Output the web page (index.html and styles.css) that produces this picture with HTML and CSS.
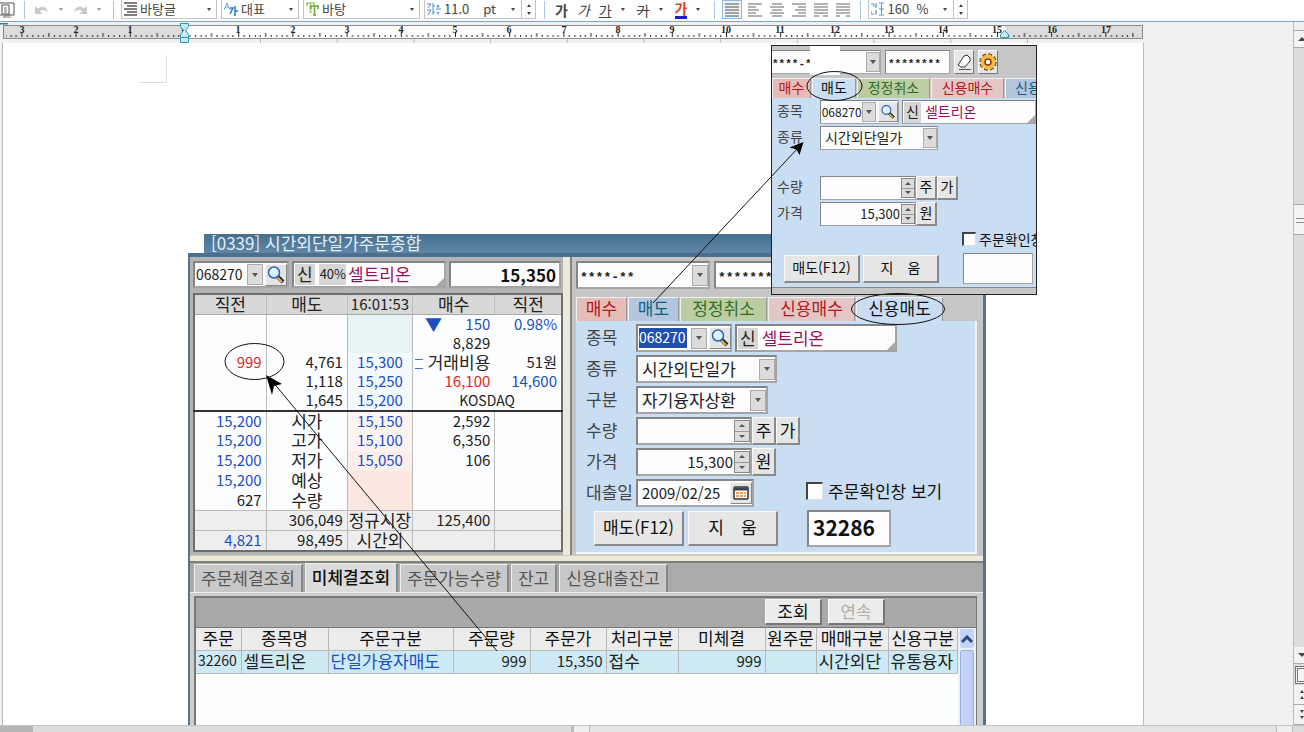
FILE: index.html
```html
<!DOCTYPE html>
<html lang="ko">
<head>
<meta charset="utf-8">
<title>시간외단일가주문종합</title>
<link rel="stylesheet" href="styles.css">
</head>
<body>
<svg class="defs" aria-hidden="true">
  <symbol id="search" viewBox="0 0 20 20"><path d="M11 11l6 6" stroke="#222" stroke-width="4"/><path d="M11.500 12.500l4.500 4.500" stroke="#e8b840" stroke-width="2"/><circle cx="8" cy="7.500" r="5.500" fill="#d8f2ff" stroke="#2f62b8" stroke-width="1.500"/><path d="M4.500 8a4 4 0 0 1 4-4" stroke="#fff" stroke-width="1.500" fill="none"/></symbol>
  <symbol id="undo" viewBox="0 0 16 12"><path d="M1 2v8h8L6 7.500c2-2 5-2 8 1C13 3 8 1 4 4.500z" fill="#c9c9c9"/></symbol>
  <symbol id="lines" viewBox="0 0 14 14"><path d="M0 1h14M0 4h14M0 7h14M0 10h14M0 13h14" stroke="#a0a0a0" stroke-width="2"/></symbol>
</svg>

<header class="toolbar">
  <button class="tool" aria-label="미리 보기"><svg width="15" height="16" viewBox="0 0 15 16"><path d="M0 1h14v12H0" fill="none" stroke="#555"/><path d="M2 3h7v9H2z" fill="#fff" stroke="#555"/><path d="M4 6h3M4 8h3M4 10h3M10 12v2H4v2h8" stroke="#777" fill="none"/></svg></button>
  <span class="sep sep-a"></span>
  <button class="tool undo" aria-label="되돌리기"><svg width="16" height="12"><use href="#undo"/></svg><i class="caret dim"></i></button>
  <button class="tool redo" aria-label="다시 실행"><svg width="16" height="12" class="flip"><use href="#undo"/></svg><i class="caret dim"></i></button>
  <span class="sep sep-b"></span>
  <label class="combo c-style"><svg width="13" height="14" viewBox="0 0 13 14"><path d="M0 1h13M3 4h10M0 7h13M3 10h10M0 13h13" stroke="#555" stroke-width="1.500"/></svg><select aria-label="스타일"><option>바탕글</option></select><i class="caret"></i></label>
  <label class="combo c-lang"><svg width="14" height="14" viewBox="0 0 14 14"><path d="M0 8l3-7 3 7M1 5h4" fill="none" stroke="#6aa4dc"/><path d="M6 6h3l-3 6M11 4v10M11 9h3" fill="none" stroke="#2f78c8" stroke-width="1.500"/></svg><select aria-label="언어"><option>대표</option></select><i class="caret"></i></label>
  <label class="combo c-font"><svg width="13" height="14" viewBox="0 0 13 14"><path d="M1 4V1h7v3M4.500 1v9M3 10h3" fill="none" stroke="#a4cf6a" stroke-width="1.500"/><path d="M5 7V4h7v3M8.500 4v9M7 13h3" fill="none" stroke="#6aa63a" stroke-width="1.500"/></svg><select aria-label="글꼴"><option>바탕</option></select><i class="caret"></i></label>
  <div class="combo c-size"><svg width="14" height="14" viewBox="0 0 14 14"><path d="M0 2h4l-3 4M6 1v6M6 4h2M0 8h4l-3 5M6 7v6M6 10h2M9 7h5M11 3v3M10 5l1-2 1 2M10 10l1 2 1-2" fill="none" stroke="#4a90d8"/></svg><input aria-label="글자 크기" value="11.0"><span>pt</span><i class="caret"></i><span class="spin"><i class="caret up"></i><i class="caret"></i></span></div>
  <span class="sep sep-c"></span>
  <button class="tool ga bold">가</button>
  <button class="tool ga ital">가</button>
  <button class="tool ga under"><u>가</u><i class="caret"></i></button>
  <button class="tool ga strike"><s>가</s><i class="caret"></i></button>
  <button class="tool ga color"><b>가</b><i class="caret"></i></button>
  <span class="sep sep-d"></span>
  <div class="aligns">
    <button class="tool on" aria-label="양쪽 정렬"><svg width="14" height="14"><use href="#lines"/></svg></button>
    <button class="tool" aria-label="왼쪽 정렬"><svg width="14" height="14" viewBox="0 0 14 14"><path d="M0 1h14M0 4h8M0 7h11M0 10h8M0 13h14" stroke="#999" stroke-width="1.500"/></svg></button>
    <button class="tool" aria-label="가운데 정렬"><svg width="14" height="14" viewBox="0 0 14 14"><path d="M2 1h10M0 4h14M2 7h10M0 10h14M2 13h10" stroke="#999" stroke-width="1.500"/></svg></button>
    <button class="tool" aria-label="오른쪽 정렬"><svg width="14" height="14" viewBox="0 0 14 14"><path d="M0 1h14M6 4h8M3 7h11M6 10h8M0 13h14" stroke="#999" stroke-width="1.500"/></svg></button>
    <button class="tool" aria-label="배분 정렬"><svg width="14" height="14" viewBox="0 0 14 14"><path d="M0 1h14M0 4h14M0 7h14M0 10h14M0 13h5M9 13h5" stroke="#999" stroke-width="1.500"/></svg></button>
    <button class="tool" aria-label="나눔 정렬"><svg width="14" height="14" viewBox="0 0 14 14"><path d="M0 1h14M0 4h14M0 7h14M0 10h14M0 13h4M10 13h4" stroke="#999" stroke-width="1.500"/></svg></button>
  </div>
  <span class="sep sep-e"></span>
  <div class="combo c-line"><svg width="13" height="14" viewBox="0 0 13 14"><path d="M0 2h3v3M5 1v5M5 3h1M0 9v3h3M5 8v5M5 10h1M8 1h5M8 7h5M8 13h5M10.500 2v10" fill="none" stroke="#4a90d8"/></svg><input aria-label="줄 간격" value="160"><span>%</span><i class="caret"></i><span class="spin"><i class="caret up"></i><i class="caret"></i></span></div>
</header>

<div class="work">
  <main class="doc">
    <svg class="ruler" height="20" aria-hidden="true">
      <defs><pattern id="ticks" x="184" y="0" width="54.200" height="18" patternUnits="userSpaceOnUse"><path d="M0.500 9v5M27.500 10v4M6 12v2M11.500 12v2M17 12v2M22 12v2M33 12v2M38.500 12v2M44 12v2M49 12v2" stroke="#222"/></pattern>
      <pattern id="marks" x="260" y="0" width="76.700" height="20" patternUnits="userSpaceOnUse"><path d="M0.500 16v4" stroke="#bbb"/></pattern></defs>
      <rect x="3.500" y="2.500" width="1139" height="13" fill="#fff" stroke="#8a8a8a"/>
      <path d="M4 3h180v12H4zM1005 3h137v12H1005z" fill="#dcdcdc"/>
      <rect x="6" y="0" width="1132" height="15" fill="url(#ticks)"/>
      <rect x="230" y="16" width="800" height="4" fill="url(#marks)"/>
      <g class="nums"><text x="22" y="10">3</text><text x="76" y="10">2</text><text x="130" y="10">1</text><text x="184" y="10">0</text><text x="238" y="10">1</text><text x="293" y="10">2</text><text x="347" y="10">3</text><text x="401" y="10">4</text><text x="455" y="10">5</text><text x="509" y="10">6</text><text x="564" y="10">7</text><text x="618" y="10">8</text><text x="672" y="10">9</text><text x="726" y="10">10</text><text x="780" y="10">11</text><text x="835" y="10">12</text><text x="889" y="10">13</text><text x="943" y="10">14</text><text x="997" y="10">15</text><text x="1052" y="10">16</text><text x="1106" y="10">17</text></g>
      <path d="M0 0h8" stroke="#2f7f9f" stroke-width="3"/>
      <path d="M180.500 0.500h8v3l-3 4 3 4v3h-8v-3l3-4-3-4zM180.500 14.500h8v5h-8z" fill="#bfeef8" stroke="#3a93a8"/>
      <path d="M1000.500 14.500v-3l4-4 4 4v3z" fill="#bfeef8" stroke="#3a93a8"/>
    </svg>
    <section class="sheet">
      <div class="corner"></div>

      <div class="hts">
        <h1 class="title"><span>[0339] 시간외단일가주문종합</span></h1>
        <div class="panes">
          <div class="quote">
            <div class="finder">
              <div class="box code"><input aria-label="종목코드" value="068270"><i class="drop"></i><button class="mini" aria-label="종목 검색"><svg width="20" height="20"><use href="#search"/></svg></button></div>
              <div class="box name fold"><span class="tag">신</span><span class="tag pct">40%</span><span class="stock">셀트리온</span></div>
              <div class="box last">15,350</div>
            </div>
            <table class="book">
              <colgroup><col class="k1"><col class="k2"><col class="k3"><col class="k4"><col class="k5"></colgroup>
              <thead><tr><th>직전</th><th>매도</th><th class="clock">16:01:53</th><th>매수</th><th>직전</th></tr></thead>
              <tbody class="asks">
                <tr><td></td><td></td><td rowspan="2"></td><td class="b"><span class="down">▼</span>150</td><td class="b">0.98%</td></tr>
                <tr><td></td><td></td><td>8,829</td><td></td></tr>
                <tr><td class="r">999</td><td>4,761</td><td class="b mid">15,300</td><td class="han"><span class="eq"></span>거래비용</td><td>51원</td></tr>
                <tr><td></td><td>1,118</td><td class="b mid">15,250</td><td class="r">16,100</td><td class="b">14,600</td></tr>
                <tr><td></td><td>1,645</td><td class="b mid">15,200</td><td colspan="2" class="mid market">KOSDAQ</td></tr>
              </tbody>
              <tbody class="bids">
                <tr><td class="b">15,200</td><td class="mid han">시가</td><td class="b mid">15,150</td><td>2,592</td><td></td></tr>
                <tr><td class="b">15,200</td><td class="mid han">고가</td><td class="b mid">15,100</td><td>6,350</td><td></td></tr>
                <tr><td class="b">15,200</td><td class="mid han">저가</td><td class="b mid">15,050</td><td>106</td><td></td></tr>
                <tr><td class="b">15,200</td><td class="mid han">예상</td><td></td><td></td><td></td></tr>
                <tr><td>627</td><td class="mid han">수량</td><td></td><td></td><td></td></tr>
              </tbody>
              <tfoot>
                <tr><td></td><td>306,049</td><td class="mid han">정규시장</td><td>125,400</td><td></td></tr>
                <tr><td class="b">4,821</td><td>98,495</td><td class="mid han">시간외</td><td></td><td></td></tr>
              </tfoot>
            </table>
          </div>
          <div class="order">
            <div class="account">
              <div class="box acct"><select aria-label="계좌"><option>****-**</option></select><i class="drop"></i></div>
              <div class="box pwd"><input aria-label="비밀번호" value="********"></div>
            </div>
            <nav class="tabs"><button class="t-buy">매수</button><button class="t-sell">매도</button><button class="t-mod">정정취소</button><button class="t-cbuy">신용매수</button><button class="t-on">신용매도</button></nav>
            <form class="form">
              <div class="row"><label for="m1">종목</label><div class="box code"><input id="m1" class="picked" value="068270"><i class="drop"></i><button type="button" class="mini" aria-label="종목 검색"><svg width="20" height="20"><use href="#search"/></svg></button></div><div class="box name fold"><span class="tag">신</span><span class="stock">셀트리온</span></div></div>
              <div class="row"><label for="m2">종류</label><div class="box kind"><select id="m2"><option>시간외단일가</option></select><i class="drop"></i></div></div>
              <div class="row"><label for="m3">구분</label><div class="box sort"><select id="m3"><option>자기융자상환</option></select><i class="drop"></i></div></div>
              <div class="row"><label for="m4">수량</label><div class="box amount"><input id="m4"><span class="updown"><i></i><i></i></span></div><button type="button" class="unit">주</button><button type="button" class="unit">가</button></div>
              <div class="row"><label for="m5">가격</label><div class="box amount"><input id="m5" value="15,300"><span class="updown"><i></i><i></i></span></div><button type="button" class="unit">원</button></div>
              <div class="row"><label for="m6">대출일</label><div class="box date"><input id="m6" value="2009/02/25"><button type="button" class="mini" aria-label="달력"><svg width="16" height="16" viewBox="0 0 16 16"><rect x="1" y="2" width="14" height="12" rx="1" fill="#fff" stroke="#333" stroke-width="1.500"/><path d="M1 4h14" stroke="#444" stroke-width="3"/><path d="M3 8h10M3 11h10" stroke="#f0a050" stroke-width="2" stroke-dasharray="3 1"/></svg></button></div><label class="check"><input type="checkbox">주문확인창 보기</label></div>
              <div class="acts"><button type="button">매도(F12)</button><button type="button">지&emsp;움</button><output class="box num">32286</output></div>
            </form>
          </div>
        </div>
        <div class="lower">
          <nav class="ltabs"><button>주문체결조회</button><button class="on">미체결조회</button><button>주문가능수량</button><button>잔고</button><button>신용대출잔고</button></nav>
          <div class="list">
            <div class="listbar"><button>조회</button><button disabled>연속</button></div>
            <div class="grid">
              <table class="orders">
                <colgroup><col class="o1"><col class="o2"><col class="o3"><col class="o4"><col class="o5"><col class="o6"><col class="o7"><col class="o8"><col class="o9"><col class="o10"></colgroup>
                <thead><tr><th>주문</th><th>종목명</th><th>주문구분</th><th>주문량</th><th>주문가</th><th>처리구분</th><th>미체결</th><th>원주문</th><th>매매구분</th><th>신용구분</th></tr></thead>
                <tbody><tr><td class="id">32260</td><td>셀트리온</td><td class="b">단일가융자매도</td><td class="num">999</td><td class="num">15,350</td><td>접수</td><td class="num">999</td><td></td><td>시간외단</td><td>유통융자</td></tr></tbody>
              </table>
              <div class="xpbar"><button aria-label="위로"><svg width="12" height="8" viewBox="0 0 12 8"><path d="M1 7l5-5 5 5" fill="none" stroke="#2a4a7a" stroke-width="3"/></svg></button><span class="xpthumb"></span></div>
            </div>
          </div>
        </div>
      </div>

      <div class="inset">
        <div class="account">
          <div class="box acct"><select aria-label="계좌"><option>****-*</option></select><i class="drop"></i></div>
          <div class="box pwd"><input aria-label="비밀번호" value="********"></div>
          <button class="sq" aria-label="지우기"><svg width="16" height="17" viewBox="0 0 16 17"><path d="M2 11l6-9 3-1 3 3v3l-5 6H5z" fill="#fff" stroke="#333"/><path d="M3 15.500h12" stroke="#555"/></svg></button>
          <button class="sq" aria-label="설정"><svg width="18" height="18" viewBox="0 0 18 18"><circle cx="9" cy="9" r="7" fill="none" stroke="#6a4010" stroke-width="3.500" stroke-dasharray="3.500 2"/><circle cx="9" cy="9" r="7" fill="#f8bc40" stroke="#f8bc40" stroke-width="1.500" stroke-dasharray="2.500 3" stroke-dashoffset="-0.500"/><circle cx="9" cy="9" r="3" fill="#fff" stroke="#8a3a10" stroke-width="1.500"/></svg></button>
        </div>
        <nav class="tabs"><button class="t-buy">매수</button><button class="t-on">매도</button><button class="t-mod">정정취소</button><button class="t-cbuy">신용매수</button><button class="t-csell">신용</button></nav>
        <form class="form">
          <div class="row"><label for="s1">종목</label><div class="box code"><input id="s1" value="068270"><i class="drop"></i><button type="button" class="mini" aria-label="종목 검색"><svg width="16" height="16"><use href="#search"/></svg></button></div><div class="box name fold"><span class="tag">신</span><span class="stock">셀트리온</span></div></div>
          <div class="row"><label for="s2">종류</label><div class="box kind"><select id="s2"><option>시간외단일가</option></select><i class="drop"></i></div></div>
          <div class="row late"><label for="s4">수량</label><div class="box amount"><input id="s4"><span class="updown"><i></i><i></i></span></div><button type="button" class="unit">주</button><button type="button" class="unit">가</button></div>
          <div class="row"><label for="s5">가격</label><div class="box amount"><input id="s5" value="15,300"><span class="updown"><i></i><i></i></span></div><button type="button" class="unit">원</button></div>
          <label class="check"><input type="checkbox">주문확인창</label>
          <div class="acts"><button type="button">매도(F12)</button><button type="button">지&emsp;움</button><output class="box num"></output></div>
        </form>
        <span class="patch"></span>
      </div>

      <svg class="notes" width="900" height="640" viewBox="180 43 900 640" fill="none" stroke="#111" aria-hidden="true">
        <ellipse cx="254.500" cy="361.500" rx="29.500" ry="18"/><ellipse cx="834.500" cy="86" rx="27.500" ry="14.500"/><ellipse cx="898" cy="309" rx="46.500" ry="15.500"/>
        <path d="M653 303L799 147M497 651L272 381"/>
        <path d="M803.500 142l-4 13-3-5.500-7-2zM266 375l16 9-8 2-2 9z" fill="#000" stroke="none"/>
      </svg>
    </section>
  </main>
  <aside class="vbar">
    <span class="split"></span><button aria-label="위로"><i class="caret up"></i></button>
    <span class="track"><span class="thumb"></span></span>
    <button aria-label="아래로"><i class="caret"></i></button>
    <button class="pagebtn" aria-label="쪽 선택"></button>
    <button class="jump" aria-label="이전 쪽"><i class="caret up"></i><i class="caret up"></i></button>
    <button class="jump" aria-label="다음 쪽"><i class="caret"></i><i class="caret"></i></button>
  </aside>
</div>
<footer class="hbar"><span class="head"></span><span class="views"></span><button aria-label="왼쪽으로"></button><span class="htrack"></span><button aria-label="오른쪽으로"></button><span class="end"></span></footer>
</body>
</html>
```
FILE: styles.css
```css
* { box-sizing: border-box; }
body { margin: 0; height: 100vh; display: flex; flex-direction: column; overflow: hidden; background: #f1f1f1; color: #222; font: 13px "Noto Sans CJK KR", sans-serif; }
button, input, select, output { font: inherit; color: inherit; margin: 0; padding: 0; border: 0; background: none; border-radius: 0; }
select { appearance: none; }
input { min-width: 0; outline: 0; }
svg { display: block; flex: none; }
.defs { position: absolute; width: 0; height: 0; }

/* editor toolbar */
.toolbar { display: flex; align-items: center; height: 22px; flex: none; padding-bottom: 2px; background: #fff; border-bottom: 1px solid #7fa6cf; color: #444; line-height: 18px; }
.tool { display: flex; align-items: center; gap: 9px; height: 18px; }
.caret { flex: none; width: 0; height: 0; border: 2px solid transparent; border-top: 3px solid #444; border-bottom: 0; }
.caret.up { border-top: 0; border-bottom: 3px solid #444; }
.caret.dim { border-top-color: #999; }
.flip { transform: scaleX(-1); }
.sep { width: 1px; height: 18px; background: #a9c6e6; flex: none; }
.sep-a { margin: 0 9px; }
.undo { margin-right: 9px; }
.sep-b { margin: 0 7px 0 12px; }
.sep-c { margin: 0 10px 0 8px; }
.sep-d { margin: 0 7px 0 14px; }
.sep-e { margin: 0 7px 0 8px; }
.combo { display: flex; align-items: center; height: 19px; padding: 0 5px 0 2px; gap: 3px; border: 1px solid #c4c4c4; border-top: 0; margin-right: 4px; flex: none; }
.combo select, .combo input { flex: 1; width: 20px; height: 18px; line-height: 18px; }
.c-style { width: 96px; }
.c-lang { width: 78px; }
.c-font { width: 117px; }
.c-size, .c-line { padding-right: 0; margin-right: 0; }
.c-size { width: 112px; }
.c-line { width: 100px; }
.c-size span, .c-line span { margin-right: 12px; }
.combo .spin { display: flex; flex-direction: column; align-items: center; gap: 5px; width: 14px; margin: 0 0 0 3px; padding: 4px 0; border-left: 1px solid #c4c4c4; }
.ga { font-size: 14px; margin-right: 9px; }
.bold { font-weight: 700; }
.ital { font-style: italic; }
.under, .strike { margin-right: 12px; }
.color { margin: 0; }
.color b { color: #d8451c; line-height: 15px; border-bottom: 3px solid #1c1cc8; }
.aligns { display: flex; gap: 4px; }
.aligns .tool { width: 18px; height: 19px; justify-content: center; }
.aligns .on { background: #eef5fc; border: 1px solid #8db7e0; width: 20px; }

/* document area */
.work { flex: 1; min-height: 0; display: flex; }
.doc { flex: 1; min-width: 0; display: flex; flex-direction: column; padding-top: 1px; }
.ruler { width: 100%; margin-bottom: 0; }
.nums { font: bold 10px "Liberation Serif", serif; text-anchor: middle; fill: #222; }
.sheet { position: relative; flex: 1; min-height: 0; margin: 0 149px 0 2px; border: solid #bbb; border-width: 0 1px; background: #fff; padding: 12px 157px 0 185px; overflow: hidden; }
.corner { width: 28px; height: 28px; margin-left: -49px; border: solid #ddd; border-width: 0 1px 1px 0; }

/* trading window */
.hts, .inset { --blue: #1c4ec4; font-size: 17px; line-height: 19px; }
.hts { margin-top: 151px; border-left: 2px solid #4f7593; border-right: 3px solid #4f7593; background: #cdcdcd; }
.title { margin: 0 0 0 -2px; height: 23px; border-bottom: 4px solid #4c7190; font-size: 17px; font-weight: 400; line-height: 17px; color: #e4eef8; padding-left: 16px; background: #fff; }
.title span { display: block; height: 19px; padding-left: 7px; background: linear-gradient(#47708f, #5e86a6); white-space: pre; }
.panes { display: grid; grid-template-columns: 373px 1fr; height: 299px; border-bottom: 1px solid #cfcaba; }
.quote { background: #b4b4b4; padding: 4px 0 0 3px; border-right: 0; }
.finder { display: grid; grid-template-columns: 96px 154px 1fr; gap: 3px; padding-right: 2px; }
.box { display: flex; align-items: center; height: 27px; background: #fdfdfd; border: 2px solid #858585; border-right-color: #a5a5a5; border-bottom-color: #a5a5a5; min-width: 0; }
.box input, .box select { flex: 1; width: 20px; height: 100%; padding: 0 0 2px 2px; }
.box.code input { font-size: 14px; padding-left: 1px; }
.drop { flex: none; display: grid; place-items: center; width: 16px; height: 21px; background: #dcdcdc; border: 1px solid #f4f4f4; border-right-color: #777; border-bottom-color: #777; outline: 1px solid #aaa; outline-offset: -1px; }
.drop::after { content: ""; border: 3px solid transparent; border-top: 4px solid #555; border-bottom: 0; }
.mini { flex: none; display: grid; place-items: center; width: 22px; height: 22px; margin-left: 2px; background: #e4e4e4; border: 1px solid #f6f6f6; border-right-color: #888; border-bottom-color: #888; }
.tag { background: #d6d6d6; padding: 0 2px 2px; margin-right: 4px; line-height: 19px; }
.tag.pct { font-size: 13px; padding: 0 0 2px 1px; margin-right: 2px; }
.stock { color: #9a0f56; padding-bottom: 2px; }
.fold { position: relative; padding-left: 1px; overflow: hidden; white-space: nowrap; }
.fold::after { content: ""; position: absolute; right: 0; bottom: 0; border: 4px solid transparent; border-right-color: #a8a8a8; border-bottom-color: #a8a8a8; }
.last { justify-content: flex-end; font-weight: 700; color: #111; padding-right: 3px; }
.book { width: 370px; margin-top: 5px; border-collapse: collapse; table-layout: fixed; background: #fdfeff; border: 2px solid #6d6d6d; font-size: 15px; }
.k1 { width: 72px; } .k2 { width: 81px; } .k3 { width: 65px; } .k4 { width: 82px; } .k5 { width: 67px; }
.book th, .book td { padding: 0 4px 1px 0; height: 20px; text-align: right; font-weight: 400; white-space: nowrap; line-height: 18px; border-right: 1px solid #bcbcbc; }
.book th { height: 20px; padding: 0; text-align: center; background: #d8d8d8; border-bottom: 1px solid #aaa; font-size: 17px; }
.book .clock { font-size: 15px; }
.book .han { font-size: 17px; }
.book .market { font-size: 14px; }
.book .mid { text-align: center; padding: 0 0 1px; }
.book .b, .orders .b { color: var(--blue); }
.book .r { color: #e02a1c; }
.book .asks td { height: 19px; }
.asks td:nth-child(3) { background: #f3f9fc; }
.asks tr:first-child td:nth-child(3) { background: #e6f4f6; }
.asks td:nth-child(4), .asks tr:nth-child(2) td:nth-child(3) { border-right-color: transparent; background: #fdfeff; }
.bids td:nth-child(3) { background: #fdf4f1; }
.bids tr:nth-child(3) td:nth-child(3) { background: #fceeea; }
.bids tr:nth-child(n+4) td:nth-child(3) { background: #fbe6e0; }
.bids { border-top: 2px solid #333; }
.book tfoot td { background: #eee; border-top: 1px solid #bbb; }
.down { float: left; margin-left: 12px; font-size: 17px; }
.eq { float: left; width: 8px; height: 10px; margin: 6px 0 0 2px; border: solid #4a70c0; border-width: 1px 0; }

.order { border-left: 7px solid #ece9d8; padding: 4px 0 0 6px; box-shadow: inset 2px 0 #858585; background: #c6c6c6; }
.account { display: flex; gap: 4px; margin-bottom: 8px; }
.account .box { height: 28px; font: bold 13px "Liberation Mono", monospace; }
.account .box select, .account .box input { padding-top: 4px; padding-bottom: 0; }
.acct { width: 134px; }
.pwd { width: 110px; }
.tabs { display: flex; gap: 1px; }
.tabs button { height: 24px; line-height: 20px; padding-bottom: 3px; border: solid #f2f2f2; border-width: 1px 0 0 1px; border-right: 1px solid #999; white-space: nowrap; }
.t-buy { width: 51px; background: #e6bcb8; color: #b3161c; }
.t-sell { width: 51px; background: #b4c6de; color: #0c6480; }
.t-mod { width: 87px; background: #bccda4; color: #2c6f22; }
.t-cbuy { width: 87px; background: #e3c6c6; color: #b3161c; }
.tabs .t-on { width: 87px; background: #c9def3; color: #111; }
.t-csell { width: 70px; background: #b4c6de; color: #0c6480; }
.form { display: flex; flex-direction: column; gap: 3px; margin-right: 6px; padding: 3px 0 5px 10px; background: #c9def3; border: solid #f4f4f4; border-width: 0 2px 2px 0; }
.row { display: flex; align-items: center; }
.row > label:first-child { width: 50px; padding-bottom: 4px; color: #444; }
.row .box { height: 28px; }
.form .code { width: 96px; margin-right: 3px; }
.form .name { width: 162px; }
.row .fold { background: #fdfdfd; }
.kind { width: 141px; }
.sort { width: 132px; }
.box.kind select, .box.sort select { padding-left: 4px; }
.amount { width: 116px; }
.box.amount input { font-size: 15px; text-align: right; padding-right: 1px; }
.date { width: 118px; }
.box.date input { font-size: 15px; padding-left: 4px; }
.box.code .picked { flex: none; width: 48px; height: 20px; margin: 0 4px 0 1px; padding-left: 0; color: #fff; background: #1f50b0; }
.updown { flex: none; display: flex; flex-direction: column; width: 16px; height: 22px; background: #dcdcdc; border: 1px solid #888; }
.updown i { flex: 1; display: grid; place-items: center; }
.updown i + i { border-top: 1px solid #999; }
.updown i::after { content: ""; border: 3px solid transparent; border-top: 3px solid #555; border-bottom: 0; }
.updown i:first-child::after { transform: rotate(180deg); }
.unit, .acts button { height: 28px; width: 24px; padding-bottom: 3px; background: #e6e6e6; border: 1px solid #fafafa; border-right: 2px solid #8a8a8a; border-bottom: 2px solid #8a8a8a; color: #111; }
.check { display: flex; align-items: center; gap: 5px; white-space: nowrap; color: #111; line-height: 16px; }
.row .check { margin-left: 52px; padding-bottom: 5px; }
.check input { appearance: none; flex: none; width: 17px; height: 18px; background: #fff; border: 2px solid #444; border-right: 1px solid #ddd; border-bottom: 1px solid #ddd; }
.acts { display: flex; gap: 4px; align-items: center; padding: 0 0 0 8px; }
.acts button { width: 90px; height: 35px; white-space: nowrap; }
.acts .box { width: 84px; height: 37px; margin-left: 25px; padding: 0 0 2px 4px; font-weight: 700; font-size: 21px; color: #111; }

/* lower order list */
.lower { border-top: 5px solid #ece9d8; }
.ltabs { display: flex; gap: 2px; align-items: flex-end; height: 32px; padding-left: 4px; background: #aaa; border-top: 2px solid #808080; border-bottom: 1px solid #f0f0f0; color: #555; }
.ltabs button { height: 28px; padding: 0 6px 2px; background: #c8c8c8; border: 1px solid #eee; border-right: 2px solid #888; border-bottom: 0; line-height: 24px; white-space: nowrap; }
.ltabs .on { background: #dcdcdc; color: #111; height: 29px; font-weight: 500; }
.list { margin: 3px 6px 0 4px; border: solid #777; border-width: 2px 1px 0 2px; background: #fdfefe; }
.listbar { display: flex; justify-content: flex-end; gap: 6px; height: 30px; padding: 1px 91px 2px 0; background: #a9a9a9; border-bottom: 1px solid #777; }
.listbar button { width: 57px; height: 26px; background: #ececec; border: 1px solid #fafafa; border-right: 2px solid #777; border-bottom: 2px solid #777; padding-bottom: 2px; color: #111; line-height: 20px; }
.listbar button:disabled { color: #b4b0a4; }
.grid { display: flex; align-items: flex-start; height: 200px; }
.orders { flex: 1; border-collapse: collapse; table-layout: fixed; width: 100%; }
.o1 { width: 45px; } .o2 { width: 87px; } .o3 { width: 125px; } .o4 { width: 77px; } .o5 { width: 76px; } .o6 { width: 72px; } .o7 { width: 87px; } .o8 { width: 51px; } .o9 { width: 72px; } .o10 { width: 69px; }
.orders th, .orders td { padding: 0 0 2px; white-space: nowrap; font-weight: 400; border-right: 1px solid #b8b8b8; border-bottom: 1px solid #b8b8b8; }
.orders th { height: 22px; background: #ececec; color: #111; }
.orders td { height: 23px; padding-left: 2px; background: #cdeaf4; }
.orders .id { font-size: 14px; }
.orders .num { font-size: 15px; text-align: right; padding: 0 3px 2px 0; }
.xpbar { width: 21px; height: 100%; padding: 1px 2px; background: #eef0f8; display: flex; flex-direction: column; gap: 2px; }
.xpbar button { display: grid; place-items: center; height: 19px; background: #c3d3fb; border-radius: 2px; }
.xpthumb { flex: 1; background: linear-gradient(90deg, #c9d8fc, #b8cbfa); border: 1px solid #98b0e8; border-radius: 2px; }

/* small order window pasted over the first one */
.inset { position: absolute; left: 768px; top: 2px; width: 266px; height: 250px; overflow: hidden; border: 1px solid #222; background: #c6c6c6; font-size: 14px; line-height: 16px; }
.inset .account { padding-top: 4px; margin-bottom: 4px; gap: 4px; }
.inset .account .box { height: 24px; font-size: 11px; }
.inset .box { border-width: 1px; }
.inset .acct { width: 109px; border-left: 0; }
.inset .acct select { padding-left: 0; }
.inset .pwd { width: 65px; }
.sq { display: grid; place-items: center; width: 20px; height: 24px; background: #e6e6e6; border: 1px solid #fafafa; border-right-color: #777; border-bottom-color: #777; }
.patch { position: absolute; left: 38px; top: -1px; width: 30px; height: 30px; background: #fff; }
.inset .tabs button { height: 20px; line-height: 16px; flex: none; }
.inset .t-buy { width: 39px; }
.inset .tabs .t-on { width: 44px; }
.inset .t-mod, .inset .t-cbuy { width: 73px; }
.inset .tabs .t-csell { width: 50px; padding-right: 4px; }
.inset .form { gap: 2px; margin: 0; padding: 2px 0 3px 5px; border-right: 0; border-bottom: 1px solid #888; }
.inset .row > label:first-child { width: 43px; }
.inset .row .box, .inset .unit { height: 24px; }
.inset .drop { width: 14px; height: 20px; }
.inset .mini { width: 20px; height: 20px; margin-left: 2px; }
.inset .code { width: 80px; }
.inset .code input { font-size: 12px; }
.inset .name { width: 135px; }
.inset .kind { width: 118px; }
.inset .late { margin-top: 24px; }
.inset .amount { width: 96px; }
.inset .amount input { font-size: 13px; }
.inset .updown { width: 14px; height: 20px; }
.inset .unit { width: 21px; }
.inset .check { margin: 3px 0 0 185px; gap: 3px; }
.inset .check input { width: 14px; height: 14px; }
.inset .acts { gap: 3px; padding: 4px 0 0 7px; }
.inset .acts button { width: 76px; height: 28px; }
.inset .acts .box { width: 70px; height: 31px; margin-left: 21px; }
.notes { position: absolute; left: 177px; top: 0; pointer-events: none; }

/* scroll bars */
.vbar { width: 11px; flex: none; display: flex; flex-direction: column; background: #dcdcdc; border-left: 1px solid #bbb; overflow: hidden; }
.vbar button { flex: none; display: grid; place-items: center; width: 16px; height: 17px; background: #f3f3f3; border-bottom: 1px solid #aaa; }
.vbar .caret { border-width: 4px 4px 0; }
.vbar .caret.up { border-width: 0 4px 4px; }
.split { height: 9px; background: #f0f0f0; border-bottom: 1px solid #aaa; }
.track { flex: 1; padding-top: 156px; }
.thumb { display: block; height: 31px; background: linear-gradient(#888, #888) 2px 13px / 12px 1px no-repeat, linear-gradient(#888, #888) 2px 17px / 12px 1px no-repeat, #f3f3f3; border: solid #aaa; border-width: 1px 0; }
.vbar .pagebtn { height: 18px; margin: 2px 0 1px 1px; border: 3px double #777; }
.vbar .jump { height: 20px; align-content: center; gap: 3px; }
.vbar .jump .caret { border-width: 3px 2px 0; }
.vbar .jump .caret.up { border-width: 0 2px 3px; }
.hbar { flex: none; display: flex; height: 7px; background: #dcdcdc; border-top: 1px solid #c4c4c4; }
.head { width: 33px; background: #b5b5b5; }
.views { width: 540px; border-right: 2px solid #bbb; }
.hbar button { width: 17px; background: #eee; border: solid #bbb; border-width: 0 1px; }
.htrack { flex: 1; background: #e4e4e4; }
.end { width: 11px; }
```
